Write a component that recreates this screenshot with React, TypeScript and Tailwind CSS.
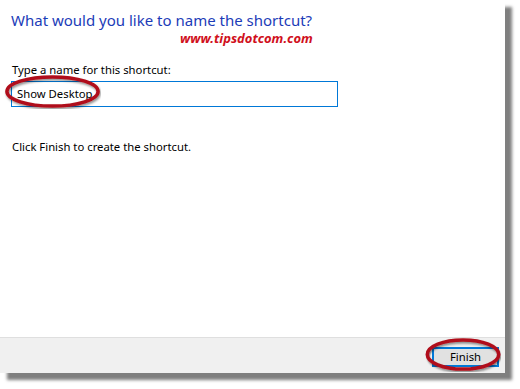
import React from "react";

function Ellipse({ className }: { className: string }) {
  return (
    <svg className={className} viewBox="0 0 100 30" preserveAspectRatio="none" fill="none">
      <defs>
        <filter id="sh" x="-20%" y="-40%" width="140%" height="180%">
          <feDropShadow dx="1" dy="1.5" stdDeviation="1" floodColor="#000" floodOpacity="0.45" />
        </filter>
      </defs>
      <ellipse cx="50" cy="15" rx="47" ry="12.5" stroke="#b0101a" strokeWidth="3.5" vectorEffect="non-scaling-stroke" filter="url(#sh)" />
    </svg>
  );
}

export default function App() {
  return (
    <div className="w-[520px] h-[389px] bg-white relative overflow-hidden" style={{ fontFamily: '"Noto Sans", "Open Sans", sans-serif' }}>
      <div className="w-[505px] h-[373px] bg-white flex flex-col shadow-[7px_7px_3px_rgba(0,0,0,0.5)] relative">
        <div className="flex-1 flex flex-col pl-[11px] pt-[11px]">
          <h1 className="text-[15px] leading-[18px] text-[#1c3cb8] font-normal">What would you like to name the shortcut?</h1>
          <div className="mt-[2px] pl-[169px] text-[13px] leading-[14px] font-bold italic text-[#d0101c]">www.tipsdotcom.com</div>
          <div className="mt-[17px] pl-[1px] text-[11.3px] leading-[16px] text-black">Type a name for this shortcut:</div>
          <div className="mt-[3px] w-[327px] h-[26px] border border-[#0078d7] flex items-center pl-[5px] text-[11.3px] text-black">Show Desktop</div>
          <div className="mt-[32px] pl-[1px] text-[11.3px] leading-[16px] text-black">Click Finish to create the shortcut.</div>
        </div>
        <div className="h-[36px] bg-[#f0f0f0] border-t border-[#dfdfdf] flex items-start justify-end pr-[6px] pt-[9px]">
          <div className="w-[67px] h-[20px] bg-[#e1e1e1] border-2 border-[#0078d7] flex items-center justify-center text-[11.3px] text-black">Finish</div>
        </div>
      </div>
      <Ellipse className="absolute left-[4px] top-[74px] w-[97px] h-[35px]" />
      <Ellipse className="absolute left-[425px] top-[337px] w-[76px] h-[35px]" />
    </div>
  );
}
